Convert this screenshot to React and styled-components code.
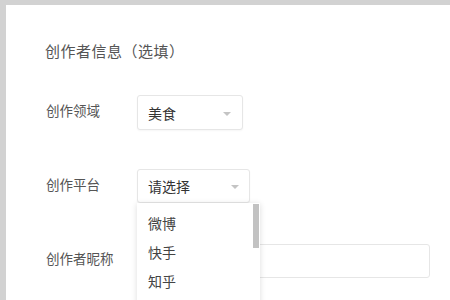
import React from "react";
import styled, { createGlobalStyle } from "styled-components";

const Global = createGlobalStyle`
  html, body { margin: 0; padding: 0; background: #d2d2d2; }
  body { font-family: "Noto Sans CJK SC", "Noto Sans", sans-serif; overflow: hidden; }
`;

const Page = styled.div`
  width: 450px;
  height: 300px;
  padding: 5px 0 0 6px;
  box-sizing: border-box;
  overflow: hidden;
`;

const Panel = styled.div`
  background: #fff;
  height: 295px;
  padding: 36px 0 0 39px;
  box-sizing: border-box;
`;

const Title = styled.div`
  font-size: 15px;
  line-height: 20px;
  color: #555;
  letter-spacing: 0.5px;
  margin-bottom: 34px;
`;

const Form = styled.div`
  display: flex;
  flex-direction: column;
  gap: 39px;
`;

const Row = styled.div`
  display: flex;
  align-items: center;
  height: 35px;
`;

const Label = styled.div`
  width: 91px;
  font-size: 13.5px;
  color: #555;
  margin-top: -5px;
  margin-left: 1px;
`;

const SelectBox = styled.div`
  position: relative;
  width: ${(p) => p.$w}px;
  height: ${(p) => p.$h}px;
  border: 1px solid #e6e6e6;
  border-radius: 3px;
  box-sizing: border-box;
  display: flex;
  align-items: center;
  padding-left: 10px;
  font-size: 14px;
  color: #333;
  background: #fff;
  box-shadow: 0 1px 2px rgba(0, 0, 0, 0.04);
  margin-top: ${(p) => p.$mt || 0}px;
`;

const Arrow = styled.span`
  position: absolute;
  right: ${(p) => p.$r}px;
  top: 50%;
  margin-top: -1px;
  width: 0;
  height: 0;
  border-left: 4px solid transparent;
  border-right: 4px solid transparent;
  border-top: 4px solid #c4c4c4;
`;

const Menu = styled.div`
  position: absolute;
  left: -1px;
  top: calc(100% + 1px);
  width: 123px;
  height: 120px;
  background: #fff;
  box-shadow: 0 1px 6px rgba(0, 0, 0, 0.14);
  z-index: 5;
  padding-top: 6px;
  box-sizing: border-box;
`;

const Item = styled.div`
  height: 29px;
  line-height: 29px;
  padding-left: 11px;
  font-size: 14px;
  color: #444;
`;

const Scroll = styled.div`
  position: absolute;
  right: 1px;
  top: 1px;
  width: 6px;
  height: 44px;
  background: #c2c2c2;
`;

const Input = styled.div`
  width: 293px;
  height: 34px;
  border: 1px solid #e6e6e6;
  border-radius: 3px;
  box-sizing: border-box;
  background: #fff;
  margin-top: 1px;
`;

export default function App() {
  return (
    <>
      <Global />
      <Page>
        <Panel>
          <Title>创作者信息（选填）</Title>
          <Form>
            <Row>
              <Label>创作领域</Label>
              <SelectBox $w={106} $h={35}>
                美食
                <Arrow $r={11} />
              </SelectBox>
            </Row>
            <Row>
              <Label>创作平台</Label>
              <SelectBox $w={113} $h={34} $mt={-2}>
                请选择
                <Arrow $r={10} />
                <Menu>
                  <Scroll />
                  <Item>微博</Item>
                  <Item>快手</Item>
                  <Item>知乎</Item>
                </Menu>
              </SelectBox>
            </Row>
            <Row>
              <Label>创作者昵称</Label>
              <Input />
            </Row>
          </Form>
        </Panel>
      </Page>
    </>
  );
}
